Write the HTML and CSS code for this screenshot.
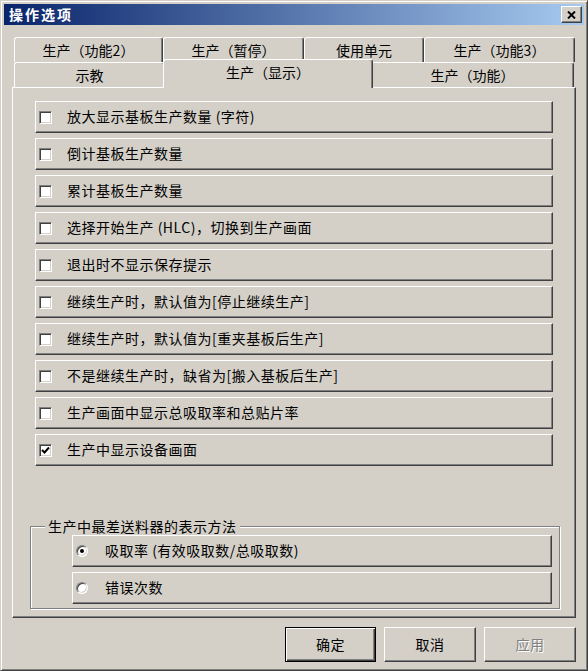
FILE: index.html
```html
<!DOCTYPE html>
<html lang="zh-CN">
<head>
<meta charset="utf-8">
<title>操作选项</title>
<link rel="stylesheet" href="styles.css">
</head>
<body>
<div class="window">
  <div class="titlebar">
    <span class="title">操作选项</span>
    <span class="close"><svg width="9" height="8" viewBox="0 0 9 8"><path d="M1 0.5 L8 7.5 M8 0.5 L1 7.5" stroke="#000" stroke-width="1.9" fill="none"/></svg></span>
  </div>
  <div class="content">
    <div class="tabs">
      <div class="tab-row">
        <div class="tab w149">生产（功能2）</div>
        <div class="tab w141">生产（暂停）</div>
        <div class="tab w120">使用单元</div>
        <div class="tab w150">生产（功能3）</div>
      </div>
      <div class="tab-row">
        <div class="tab w151">示教</div>
        <div class="tab sel">生产（显示）</div>
        <div class="tab w203">生产（功能）</div>
      </div>
    </div>
    <div class="panel">
      <div class="rows">
        <div class="opt"><span class="cb"></span><span class="lbl">放大显示基板生产数量 (字符)</span></div>
        <div class="opt"><span class="cb"></span><span class="lbl">倒计基板生产数量</span></div>
        <div class="opt"><span class="cb"></span><span class="lbl">累计基板生产数量</span></div>
        <div class="opt"><span class="cb"></span><span class="lbl">选择开始生产 (HLC)，切换到生产画面</span></div>
        <div class="opt"><span class="cb"></span><span class="lbl">退出时不显示保存提示</span></div>
        <div class="opt"><span class="cb"></span><span class="lbl">继续生产时，默认值为[停止继续生产]</span></div>
        <div class="opt"><span class="cb"></span><span class="lbl">继续生产时，默认值为[重夹基板后生产]</span></div>
        <div class="opt"><span class="cb"></span><span class="lbl">不是继续生产时，缺省为[搬入基板后生产]</span></div>
        <div class="opt"><span class="cb"></span><span class="lbl">生产画面中显示总吸取率和总贴片率</span></div>
        <div class="opt"><span class="cb"><svg width="9" height="9" viewBox="0 0 9 9"><polyline points="1,4 3.5,6.5 8,1.5" stroke="#000" stroke-width="2" fill="none"/></svg></span><span class="lbl">生产中显示设备画面</span></div>
      </div>
      <div class="group">
        <div class="legend">生产中最差送料器的表示方法</div>
        <div class="radios">
          <div class="opt ropt"><span class="rad"><span class="dot"></span></span><span class="rlbl">吸取率 (有效吸取数/总吸取数)</span></div>
          <div class="opt ropt"><span class="rad"></span><span class="rlbl">错误次数</span></div>
        </div>
      </div>
    </div>
    <div class="buttons">
      <div class="btn def">确定</div>
      <div class="btn">取消</div>
      <div class="btn dis">应用</div>
    </div>
  </div>
</div>
</body>
</html>
```
FILE: styles.css
```css
* { box-sizing: border-box; }
body {
  margin: 0;
  background: #D4D0C8;
  font-family: "Noto Sans CJK SC", "Liberation Sans", sans-serif;
  font-size: 14px;
  color: #000;
}
.window {
  width: 588px;
  height: 671px;
  background: #D4D0C8;
  border: 1px solid;
  border-color: #D4D0C8 #404040 #404040 #D4D0C8;
  box-shadow: inset 1px 1px 0 #fff, inset -1px -1px 0 #808080;
  padding: 3px;
  display: flex;
  flex-direction: column;
}
.titlebar {
  height: 21px;
  flex: none;
  background: linear-gradient(to right, #0A246A, #A6CAF0);
  display: flex;
  align-items: center;
  justify-content: space-between;
  padding: 0 2px 0 5px;
}
.title {
  color: #fff;
  font-weight: bold;
  font-size: 14px;
  letter-spacing: 2px;
  line-height: 21px;
}
.close {
  width: 21px;
  height: 17px;
  background: #D4D0C8;
  border: 1px solid;
  border-color: #fff #404040 #404040 #fff;
  box-shadow: inset -1px -1px 0 #808080;
  display: flex;
  align-items: center;
  justify-content: center;
}
.close svg { display: block; }
.content {
  padding: 12px 8px 0;
  display: flex;
  flex-direction: column;
}
.tab-row {
  display: flex;
  height: 25px;
  margin-left: 2px;
  align-items: flex-end;
}
.tab {
  flex: none;
  height: 25px;
  display: flex;
  align-items: center;
  justify-content: center;
  background: #D4D0C8;
  border-top: 1px solid #fff;
  border-left: 1px solid #fff;
  border-right: 1px solid #404040;
  box-shadow: inset -1px 0 0 #808080;
  border-radius: 3px 3px 0 0;
  white-space: nowrap;
  padding-bottom: 1px;
}
.w149 { width: 149px; }
.w141 { width: 141px; }
.w120 { width: 120px; }
.w150 { width: 151px; }
.w151 { width: 151px; }
.w203 { width: 203px; }
.tab.sel {
  width: 210px;
  height: 29px;
  margin: 0 -2px -1px;
  position: relative;
  z-index: 1;
  padding-bottom: 4px;
}
.panel {
  width: 564px;
  height: 531px;
  border: 1px solid;
  border-color: #fff #404040 #404040 #fff;
  box-shadow: inset -1px -1px 0 #808080;
  padding: 13px 0 0 22px;
}
.rows {
  display: flex;
  flex-direction: column;
  gap: 5px;
}
.opt {
  width: 518px;
  height: 32px;
  display: flex;
  align-items: center;
  padding-left: 3px;
  border: 1px solid;
  border-color: #fff #404040 #404040 #fff;
  box-shadow: inset -1px -1px 0 #808080;
}
.cb {
  flex: none;
  width: 13px;
  height: 13px;
  background: #fff;
  border: 1px solid;
  border-color: #808080 #fff #fff #808080;
  box-shadow: inset 1px 1px 0 #404040, inset -1px -1px 0 #D4D0C8;
  display: flex;
  align-items: center;
  justify-content: center;
}
.cb svg { display: block; }
.lbl {
  margin-left: 15px;
  line-height: 16px;
  padding-bottom: 2px;
  letter-spacing: 0.5px;
  white-space: nowrap;
}
.group {
  margin: 60px 0 0 -5px;
  width: 530px;
  border: 1px solid #808080;
  box-shadow: inset 1px 1px 0 #fff, 1px 1px 0 #fff;
  padding-bottom: 4px;
}
.legend {
  display: table;
  margin: -9px 0 0 14px;
  padding: 0 3px;
  background: #D4D0C8;
  line-height: 17px;
  letter-spacing: 0.5px;
}
.radios {
  margin-left: 41px;
  display: flex;
  flex-direction: column;
  gap: 5px;
}
.ropt { width: 480px; }
.rad {
  flex: none;
  width: 12px;
  height: 12px;
  border-radius: 50%;
  background: #fff;
  border: 1px solid;
  border-color: #808080 #fff #fff #808080;
  box-shadow: inset 1px 1px 0 #404040, inset -1px -1px 0 #D4D0C8;
  display: flex;
  align-items: center;
  justify-content: center;
}
.dot {
  width: 4px;
  height: 4px;
  border-radius: 50%;
  background: #000;
}
.rlbl {
  margin-left: 17px;
  line-height: 16px;
  padding-bottom: 2px;
  letter-spacing: 0.5px;
  white-space: nowrap;
}
.buttons {
  margin-top: 9px;
  display: flex;
  justify-content: flex-end;
  gap: 8px;
}
.btn {
  width: 92px;
  height: 35px;
  display: flex;
  align-items: center;
  justify-content: center;
  border: 1px solid;
  border-color: #fff #404040 #404040 #fff;
  box-shadow: inset -1px -1px 0 #808080;
  padding-bottom: 1px;
  letter-spacing: 0.5px;
}
.btn.def {
  width: 91px;
  border: 1px solid #000;
  box-shadow: inset 1px 1px 0 #fff, inset -1px -1px 0 #404040, inset -2px -2px 0 #808080;
}
.btn.dis {
  color: #808080;
  text-shadow: 1px 1px 0 #fff;
}
```
